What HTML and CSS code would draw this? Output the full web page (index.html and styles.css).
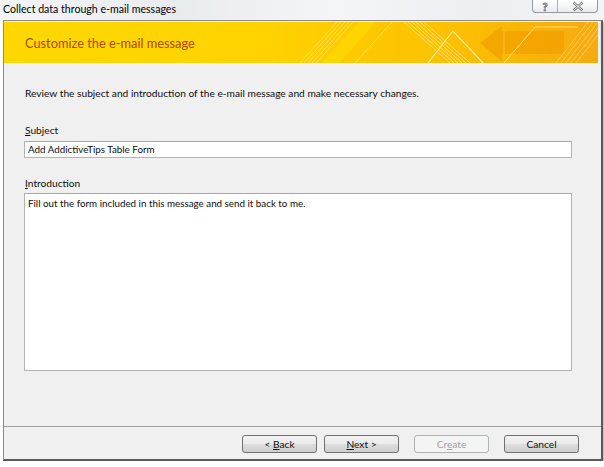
FILE: index.html
```html
<!DOCTYPE html>
<html lang="en">
<head>
    <meta charset="UTF-8">
    <title>Collect data through e-mail messages</title>
    <link rel="stylesheet" href="styles.css">
</head>
<body>

    <div class="titlebar">
        <span class="title">Collect data through e-mail messages</span>
        <div class="caption-buttons">
            <span class="cap-btn help">?</span>
            <span class="cap-btn close">
                <svg width="12" height="11" viewBox="0 0 12 11">
                    <path d="M1.5 1.5 L10.5 9.5 M10.5 1.5 L1.5 9.5" stroke="#7a7a7a" stroke-width="2.4" fill="none"/>
                    <path d="M1.5 1.5 L10.5 9.5 M10.5 1.5 L1.5 9.5" stroke="#f4f4f4" stroke-width="1" fill="none"/>
                </svg>
            </span>
        </div>
    </div>

    <div class="dialog">
        <div class="banner">
            <svg class="banner-art" width="594" height="41" viewBox="0 0 594 41">
                <defs>
                    <linearGradient id="bannerFill" x1="0" y1="0" x2="1" y2="0">
                        <stop offset="0" stop-color="#ffd800"/>
                        <stop offset="0.45" stop-color="#ffd200"/>
                        <stop offset="0.75" stop-color="#fcc000"/>
                        <stop offset="1" stop-color="#f7aa10"/>
                    </linearGradient>
                </defs>
                <rect width="594" height="41" fill="url(#bannerFill)"/>
                <!-- left stripe band -->
                <g stroke="#ffe866" stroke-width="0.8" fill="none" opacity="0.9">
                    <path d="M296 41 L333 0"/>
                    <path d="M300 41 L337 0"/>
                    <path d="M304 41 L341 0"/>
                    <path d="M308 41 L345 0"/>
                    <path d="M312 41 L349 0"/>
                    <path d="M351 41 L388 0"/>
                </g>
                <path d="M318 41 L355 0 L372 0 L335 41 Z" fill="#ffe000" opacity="0.5"/>
                <!-- descending band -->
                <g stroke="#ffe37a" stroke-width="0.8" fill="none">
                    <path d="M400 0 L446 41"/>
                    <path d="M404 0 L450 41"/>
                    <path d="M408 0 L454 41"/>
                    <path d="M412 0 L458 41"/>
                    <path d="M416 0 L462 41"/>
                    <path d="M420 0 L466 41"/>
                </g>
                <path d="M424 41 L449 9 L479 41" stroke="#fff0a0" stroke-width="1.1" fill="none"/>
                <!-- arrow -->
                <path d="M476 21 L498 4 L498 9 L560 9 L560 32 L498 32 L498 39 Z" fill="#f2a000" opacity="0.75"/>
                <path d="M500 9 L500 32" stroke="#f8c040" stroke-width="1"/>
                <path d="M500 41 L531 5 L574 5" stroke="#ffe070" stroke-width="1" fill="none"/>
                <!-- right stripe band -->
                <g stroke="#fcd060" stroke-width="0.8" fill="none">
                    <path d="M552 41 L584 0"/>
                    <path d="M557 41 L589 0"/>
                    <path d="M562 41 L594 0"/>
                    <path d="M567 41 L599 0"/>
                    <path d="M572 41 L604 0"/>
                </g>
            </svg>
            <span class="banner-title">Customize the e-mail message</span>
        </div>

        <div class="content">
            <p class="intro">Review the subject and introduction of the e-mail message and make necessary changes.</p>

            <label class="field-label"><u>S</u>ubject</label>
            <div class="textbox">Add AddictiveTips Table Form</div>

            <label class="field-label label-intro"><u>I</u>ntroduction</label>
            <div class="textbox textarea">Fill out the form included in this message and send it back to me.</div>
        </div>

        <div class="footer">
            <button class="btn">&lt; <u>B</u>ack</button>
            <button class="btn btn-next"><u>N</u>ext &gt;</button>
            <button class="btn btn-wide" disabled>Cr<u>e</u>ate</button>
            <button class="btn btn-wide">Cancel</button>
        </div>
    </div>

</body>
</html>
```

FILE: styles.css
```css
body {
    margin: 0;
    background: #ffffff;
    font-family: Lato, "Noto Sans", sans-serif;
    font-size: 10.2px;
    color: #0e0e0e;
}

.titlebar {
    height: 20px;
    display: flex;
    justify-content: space-between;
    align-items: flex-start;
    background: linear-gradient(90deg, #f2f4f6 0%, #e9ecef 30%, #f4f5f7 55%, #eceff2 80%, #f3f4f6 100%);
}

.title {
    padding: 3px 0 0 3px;
    font-size: 10.6px;
    color: #000;
}

.caption-buttons {
    display: flex;
    margin-right: 6px;
    border: 1px solid #9a9a9a;
    border-top: none;
    border-radius: 0 0 4px 4px;
    background: linear-gradient(#ffffff, #e8ebee);
    height: 12px;
}

.cap-btn {
    display: flex;
    align-items: center;
    justify-content: center;
    height: 12px;
}

.help {
    width: 24px;
    border-right: 1px solid #b0b0b0;
    font-weight: bold;
    font-size: 11px;
    color: #f4f4f4;
    -webkit-text-stroke: 0.8px #707070;
}

.close {
    width: 39px;
}

.dialog {
    margin-left: 3px;
    width: 597px;
    height: 438px;
    border: 1px solid #8c8c8c;
    border-right: 2px solid #5a5a5a;
    border-bottom: 2px solid #5a5a5a;
    background: #f0f0f0;
    display: flex;
    flex-direction: column;
    box-shadow: 1px 2px 2px rgba(0, 0, 0, 0.35);
}

.banner {
    height: 41px;
    margin-top: 1px;
    position: relative;
    display: flex;
    align-items: center;
    border-right: 1px solid #e6e6e6;
}

.banner-art {
    position: absolute;
    left: 0;
    top: 0;
}

.banner-title {
    position: relative;
    padding-left: 21px;
    font-size: 12.8px;
    color: #b04800;
}

.content {
    flex: 1;
    padding: 0 29px 0 20px;
    display: flex;
    flex-direction: column;
    border-bottom: 1px solid #a0a0a0;
}

.intro {
    margin: 23px 0 0 1px;
    line-height: 14px;
}

.field-label {
    margin: 23px 0 4px 1px;
    line-height: 14px;
}

.label-intro {
    margin-top: 18px;
    margin-bottom: 3px;
}

.textbox {
    height: 15px;
    border: 1px solid #b4b4b4;
    border-top-color: #a8a8a8;
    background: #fff;
    padding: 0 3px;
    line-height: 15px;
    font-size: 9.8px;
}

.textarea {
    height: 174px;
    padding-top: 2px;
}

.footer {
    height: 32px;
    display: flex;
    justify-content: flex-end;
    align-items: flex-start;
    padding: 8px 22px 0 0;
    box-sizing: border-box;
    gap: 15px;
}

.btn {
    width: 75px;
    height: 18px;
    border: 1px solid #707070;
    border-radius: 3px;
    background: linear-gradient(#f3f3f3 0%, #ebebeb 48%, #dddddd 52%, #cfcfcf 100%);
    font-family: inherit;
    font-size: 10.2px;
    color: #111;
    padding: 0;
    line-height: 16px;
}

.btn-next {
    margin-left: -8px;
}

.btn:disabled {
    border-color: #adb2b5;
    background: #f4f4f4;
    color: #a3a3a3;
}
```
